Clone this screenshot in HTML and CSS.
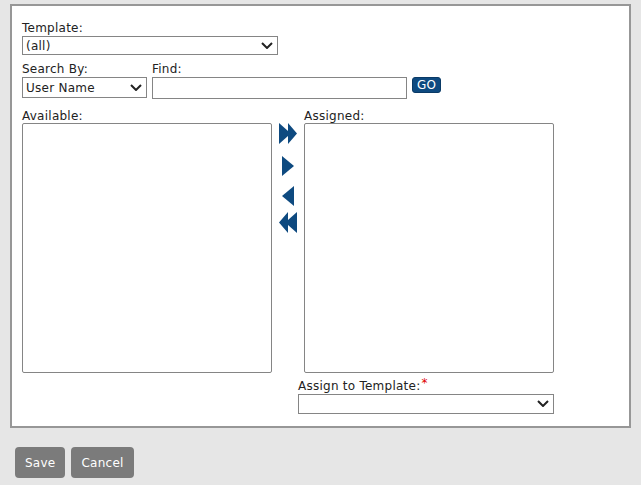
FILE: index.html
```html
<!DOCTYPE html>
<html>
<head>
<meta charset="utf-8">
<link rel="stylesheet" href="styles.css">
</head>
<body>
<div class="panel">
  <div class="field">
    <label class="lbl">Template:</label>
    <div class="sel sel-template">
      <select><option>(all)</option></select>
      <svg class="chev" width="12" height="7" viewBox="0 0 12 7"><path d="M1 1 L6 6 L11 1" fill="none" stroke="#222" stroke-width="2"/></svg>
    </div>
  </div>
  <div class="search-row">
    <div class="field">
      <label class="lbl">Search By:</label>
      <div class="sel sel-search">
        <select><option>User Name</option></select>
        <svg class="chev" width="12" height="7" viewBox="0 0 12 7"><path d="M1 1 L6 6 L11 1" fill="none" stroke="#222" stroke-width="2"/></svg>
      </div>
    </div>
    <div class="field">
      <label class="lbl">Find:</label>
      <div class="find-line">
        <input class="find" type="text">
        <button class="go">GO</button>
      </div>
    </div>
  </div>
  <div class="lists">
    <div class="col">
      <label class="lbl list-lbl">Available:</label>
      <select class="listbox" multiple></select>
    </div>
    <div class="arrows">
      <svg class="arr arr-dr" width="18" height="21" viewBox="0 0 18 21"><polygon points="0,0 9,8 9,0 18,10.5 9,21 9,13 0,21" fill="#0e4a80"/></svg>
      <svg class="arr arr-r" width="12" height="20" viewBox="0 0 12 20"><polygon points="0,0 12,10 0,20" fill="#0e4a80"/></svg>
      <svg class="arr arr-l" width="12" height="20" viewBox="0 0 12 20"><polygon points="12,0 0,10 12,20" fill="#0e4a80"/></svg>
      <svg class="arr arr-dl" width="18" height="21" viewBox="0 0 18 21"><polygon points="18,0 9,8 9,0 0,10.5 9,21 9,13 18,21" fill="#0e4a80"/></svg>
    </div>
    <div class="col">
      <label class="lbl list-lbl">Assigned:</label>
      <select class="listbox" multiple></select>
    </div>
    <div class="assign">
      <label class="lbl">Assign to Template:<span class="req">*</span></label>
      <div class="sel sel-assign">
        <select><option></option></select>
        <svg class="chev" width="12" height="7" viewBox="0 0 12 7"><path d="M1 1 L6 6 L11 1" fill="none" stroke="#222" stroke-width="2"/></svg>
      </div>
    </div>
  </div>
</div>
<div class="actions">
  <button class="btn">Save</button>
  <button class="btn">Cancel</button>
</div>
</body>
</html>
```
FILE: styles.css
```css
html, body {
  margin: 0;
  padding: 0;
  background: #e6e6e6;
  font-family: "DejaVu Sans", Verdana, sans-serif;
  font-size: 12px;
  letter-spacing: 0.25px;
  color: #222;
}
.panel {
  box-sizing: border-box;
  width: 621px;
  margin: 4px 0 0 10px;
  border: 2px solid #979797;
  background: #fff;
  padding: 15px 10px 12px 10px;
}
.lbl {
  display: block;
  line-height: 14px;
  margin-bottom: 1px;
  color: #222;
}
.sel {
  position: relative;
  width: max-content;
}
.sel select {
  -webkit-appearance: none;
  appearance: none;
  box-sizing: border-box;
  display: block;
  border: 1px solid #858585;
  border-radius: 0;
  background: #fff;
  font-family: inherit;
  font-size: 12px;
  letter-spacing: 0.25px;
  color: #222;
  padding: 0 0 0 3px;
  margin: 0;
  outline: none;
}
.chev {
  position: absolute;
  right: 5px;
  top: 50%;
  margin-top: -4px;
  pointer-events: none;
}
.sel-template select { width: 256px; height: 19px; }
.search-row {
  display: flex;
  gap: 5px;
  margin-top: 7px;
}
.sel-search select { width: 125px; height: 21px; }
.find-line {
  display: flex;
  align-items: flex-start;
  gap: 5px;
}
.find {
  box-sizing: border-box;
  width: 255px;
  height: 22px;
  border: 1px solid #858585;
  margin: 0;
  padding: 0 3px;
  font-family: inherit;
  font-size: 12px;
  outline: none;
}
.go {
  box-sizing: border-box;
  height: 16px;
  width: 29px;
  margin: 0;
  padding: 0;
  border: 1px solid #0a3a66;
  border-radius: 3px;
  background: #0e4a80;
  color: #fff;
  font-family: inherit;
  font-size: 12px;
  letter-spacing: 0.25px;
  line-height: 14px;
}
.lists {
  display: grid;
  grid-template-columns: 250px 32px 250px;
  margin-top: 10px;
}
.list-lbl {
  margin-bottom: 0;
}
.listbox {
  box-sizing: border-box;
  display: block;
  width: 250px;
  height: 250px;
  border: 1px solid #858585;
  margin: 0;
  background: #fff;
  outline: none;
}
.arrows {
  display: flex;
  flex-direction: column;
  align-items: center;
  padding-top: 14px;
}
.arr { display: block; }
.arr-r { margin-top: 12px; }
.arr-l { margin-top: 10px; }
.arr-dl { margin-top: 6px; }
.assign {
  grid-column: 2 / 4;
  margin-left: 26px;
  margin-top: 6px;
}
.req {
  color: #e00000;
  font-size: 12px;
  position: relative;
  top: -3px;
  margin-left: 1px;
}
.sel-assign select { width: 256px; height: 20px; }
.actions {
  display: flex;
  gap: 6px;
  margin: 19px 0 0 15px;
}
.btn {
  height: 31px;
  padding: 0 10px;
  border: none;
  border-radius: 4px;
  background: #7b7b7b;
  color: #fff;
  font-family: inherit;
  font-size: 12px;
  letter-spacing: 0.25px;
}
```
